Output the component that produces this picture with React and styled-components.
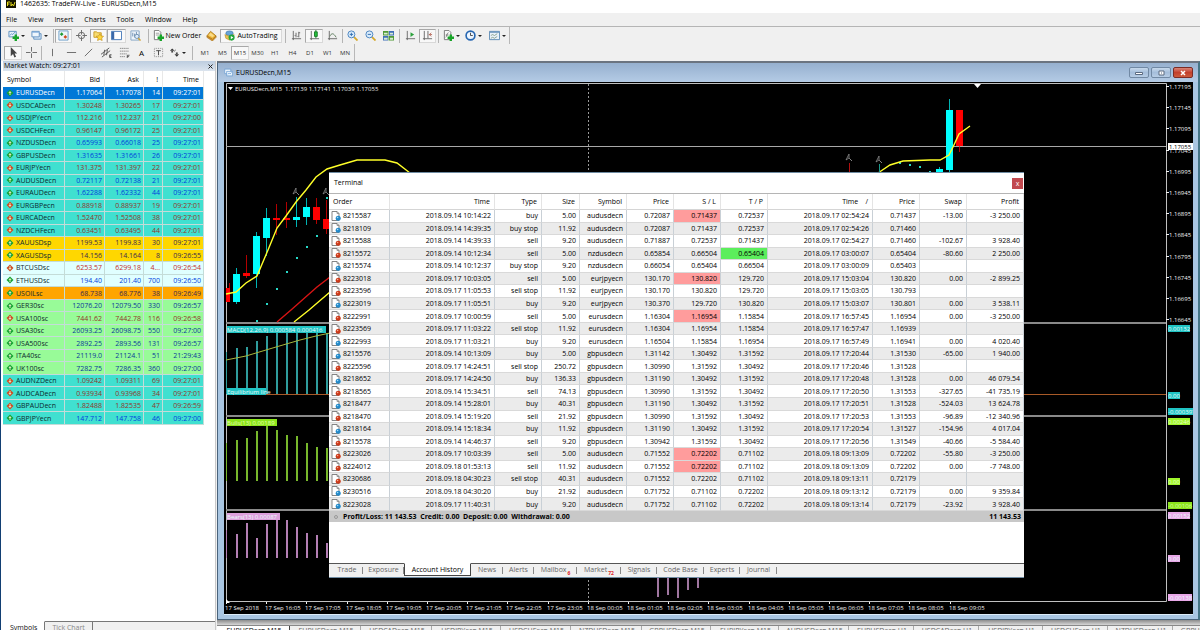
import React from "react";
import styled, { createGlobalStyle, css } from "styled-components";

const GlobalStyle = createGlobalStyle`
  * { box-sizing: border-box; }
  body {
    margin: 0;
    font-family: "Open Sans", "Noto Sans", sans-serif;
    font-size: 7px;
    line-height: 12px;
    color: #000;
    background: #f0f0f0;
  }
  button {
    margin: 0;
    padding: 0;
    border: 0;
    background: none;
    font: inherit;
    color: inherit;
    white-space: nowrap;
  }
  svg { display: block; }
`;

const Shell = styled.div`
  display: flex;
  flex-direction: column;
  height: 100vh;
  overflow: hidden;
  border-left: 1px solid #123f73;
  background: #f0f0f0;
`;

const TitleBar = styled.header`
  display: flex;
  gap: 4px;
  height: 13px;
  padding-left: 5px;
  background: #fff;
  line-height: 8px;
`;

const MenuBar = styled.nav`
  display: flex;
  align-items: center;
  gap: 11px;
  height: 13px;
  padding-left: 5px;
`;

const ToolRow = styled.div`
  display: flex;
  align-items: center;
  width: max-content;
  height: ${(p) => p.$h}px;
  padding-left: 3px;
  border-right: 1px solid #b8b8b8;
`;

const ToolArea = styled.div`
  border-top: 1px solid #b5b5b5;
`;

const Tool = styled.button`
  display: flex;
  align-items: center;
  justify-content: center;
  gap: 2px;
  width: ${(p) => p.$w}px;
  height: 14px;
  font-size: ${(p) => p.$size || 7}px;
  color: ${(p) => p.$color || "#000"};
  ${(p) =>
    p.$on &&
    css`
      background: #f8f8f8;
      border: 1px solid #d8d8d8;
      border-top-color: #a8a8a8;
      border-left-color: #a8a8a8;
    `}
`;

const Divider = styled.span`
  width: ${(p) => p.$w}px;
  height: 14px;
  background: linear-gradient(#b4b4b4, #b4b4b4) center / 1px 100% no-repeat;
`;

const Caret = styled.i`
  border: 2px solid transparent;
  border-top-color: #222;
  border-bottom: 0;
`;

const Main = styled.main`
  display: flex;
  flex: 1;
  min-height: 0;
`;

const Watch = styled.section`
  display: flex;
  flex-direction: column;
  width: 215px;
  padding-left: 2px;
  border-right: 1px solid #c9c9c9;
  background: #fff;
`;

const WatchTitle = styled.div`
  display: flex;
  align-items: center;
  justify-content: space-between;
  height: 10px;
  padding: 0 2px 0 1px;
  background: linear-gradient(#bdcddf, #dbe4ee);
`;

const WatchTable = styled.table`
  table-layout: fixed;
  width: 201px;
  height: 354px;
  border-collapse: separate;
  border-spacing: 0;
  line-height: 11px;
`;

const WatchHead = styled.th`
  height: 16px;
  padding: 0 4px;
  border-right: 1px solid #e8e8e8;
  font-weight: 400;
  text-align: ${(p) => (p.$left ? "left" : "right")};
`;

const WatchRow = styled.tr`
  background: ${(p) => p.$bg};
  color: ${(p) => p.$color};
`;

const WatchCell = styled.td`
  padding: 0 2px;
  border-right: 1px solid #c4dcd8;
  border-bottom: 1px solid #c4dcd8;
  text-align: right;
  white-space: nowrap;
`;

const SymbolCell = styled(WatchCell)`
  padding: 0;
  color: ${(p) => (p.$selected ? "#fff" : "#0c2a2e")};
  text-align: left;
`;

const SymbolLabel = styled.span`
  display: flex;
  align-items: center;
  gap: 2px;
  padding-left: 3px;
`;

const WatchTabs = styled.div`
  display: flex;
  height: 9px;
  margin-top: auto;
  overflow: hidden;
`;

const WatchTab = styled.button`
  height: 12px;
  padding: 0 7px;
  border-top: 1px solid ${(p) => (p.$on ? "#fff" : "#777")};
  border-right: 1px solid #777;
  background: ${(p) => (p.$on ? "#fff" : "#f0f0f0")};
  color: ${(p) => (p.$on ? "#111" : "#888")};
  line-height: 10px;
`;

const TabFiller = styled.div`
  flex: 1;
  border-top: 1px solid #777;
  background: #f0f0f0;
`;

const Desk = styled.section`
  position: relative;
  display: flex;
  flex: 1;
  flex-direction: column;
  min-width: 0;
  margin-left: 1px;
  background: #f0f0f0;
`;

const ChartWindow = styled.div`
  display: flex;
  flex: 1;
  flex-direction: column;
  min-height: 0;
  padding: 0 5px 4px 6px;
  border: 1px solid #49637b;
  border-top: 2px solid #6b7480;
  border-right: 2px solid #457586;
  background: #a9c6e2;
`;

const ChartTitle = styled.div`
  display: flex;
  align-items: center;
  gap: 3px;
  height: 19px;
  margin: 0 -5px 0 -6px;
  padding: 0 5px 0 6px;
  background: linear-gradient(#96b0cf, #b4cbe5);
`;

const WindowButtons = styled.div`
  display: flex;
  gap: 2px;
  margin-left: auto;
`;

const WindowButton = styled.button`
  display: flex;
  align-items: center;
  justify-content: center;
  width: 20px;
  height: 11px;
  border: 1px solid ${(p) => (p.$red ? "#7c2b25" : "#7189a4")};
  border-radius: 2px;
  background: ${(p) =>
    p.$red
      ? "linear-gradient(#d98478, #c33f2b 50%, #cc5a3c)"
      : "linear-gradient(#c6d8eb, #a5bedb 50%, #b7cde5)"};
`;

const ChartBody = styled.div`
  flex: 1;
  min-height: 0;
  background: #000;
  border-bottom: 1px solid #dcecf8;
`;

const ChartSvg = styled.svg`
  width: 100%;
  height: 100%;
  font-size: 6px;
  fill: #f2f2f2;
`;

const DeskGutter = styled.div`
  height: 5px;
  background: linear-gradient(#8c8c8c, #d6d6d6);
`;

const ChartTabs = styled.div`
  display: flex;
  height: 5px;
  overflow: hidden;
  border-top: 1px solid #888;
`;

const ChartTab = styled.button`
  flex: none;
  width: ${(p) => p.$w}px;
  height: 9px;
  padding-left: 2px;
  line-height: 9px;
  border-right: 1px solid ${(p) => (p.$on ? "#444" : "#aaa")};
  background: ${(p) => (p.$on ? "#fff" : "#f0f0f0")};
  color: ${(p) => (p.$on ? "#000" : "#666")};
`;

// floats above the chart window
const Terminal = styled.section`
  position: absolute;
  top: 111px;
  left: 112px;
  right: 176px;
  border: 1px solid #6f8ca3;
  border-width: 1px 0;
  background: #fff;
`;

const TerminalTitle = styled.div`
  display: flex;
  align-items: center;
  justify-content: space-between;
  height: 21px;
  padding: 0 1px 0 5px;
  border-bottom: 1px solid #b5b5b5;
`;

const CloseButton = styled.button`
  width: 11px;
  height: 11px;
  background: #c2494f;
  color: #fff;
  line-height: 9px;
`;

const History = styled.table`
  table-layout: fixed;
  width: 100%;
  height: 328px;
  border-collapse: separate;
  border-spacing: 0;
  line-height: 11px;
`;

const HistoryHead = styled.th`
  height: 16px;
  padding: 0 4px;
  border-right: 1px solid #e4e4e4;
  border-bottom: 1px solid #d5d5d5;
  font-weight: 400;
  text-align: ${(p) => (p.$left ? "left" : "right")};
  white-space: pre;
`;

const HistoryRow = styled.tr`
  &:nth-child(even) { background: #ebebeb; }
`;

const HistoryCell = styled.td`
  padding: 0 3px 0 2px;
  border-right: 1px solid #c9d0d6;
  border-bottom: 1px solid #d9d9d9;
  background: ${(p) => p.$mark || "transparent"};
  text-align: right;
  white-space: nowrap;
`;

const OrderLabel = styled.span`
  display: flex;
  align-items: center;
  gap: 2px;
`;

const TotalCell = styled.td`
  padding: 0 3px 0 5px;
  background: #c8c8c8;
  font-weight: 700;
  text-align: ${(p) => (p.$right ? "right" : "left")};
  white-space: pre;
`;

const TotalLabel = styled.span`
  display: flex;
  align-items: center;
  gap: 5px;
`;

const Bullet = styled.i`
  width: 4px;
  height: 4px;
  border: 1px solid #999;
  border-radius: 2px;
`;

const TerminalTabs = styled.div`
  display: flex;
  height: 14px;
  margin-top: 41px;
  padding-left: 2px;
  border-top: 1px solid #555;
  background: #f0f0f0;
`;

const TerminalTab = styled.button`
  display: flex;
  align-items: center;
  justify-content: center;
  width: ${(p) => p.$w}px;
  height: 12px;
  color: #666;
  background: linear-gradient(#888, #888) right center / 1px 7px no-repeat;
  ${(p) =>
    p.$on &&
    css`
      margin-top: -1px;
      height: 13px;
      color: #000;
      background: #fff;
      border: 1px solid #444;
      border-top-color: #fff;
    `}
`;

const Badge = styled.sub`
  align-self: flex-end;
  margin-left: 1px;
  color: #d22;
  font-size: 5px;
  font-weight: 700;
  line-height: 6px;
`;

/* ---------- icons ---------- */

const Icon = ({ children, s = 11 }) => (
  <svg width={s} height={s} viewBox="0 0 12 12" fill="none" stroke="#555" aria-hidden="true">
    {children}
  </svg>
);

const plus = <path d="M8.5 5v7M5 8.5h7" stroke="#18a428" strokeWidth="2.6" />;
const axes = <path d="M2.5 1v10M1 9.5h10" stroke="#666" />;

const icons = {
  newChart: <><path d="M1 1.5h8v6H1z" fill="#e6f1fb" stroke="#5b8fc0" /><path d="M2 6l2-2 1 1 3-3" stroke="#5b8fc0" />{plus}</>,
  profiles: <><path d="M3 4h8v6H3z" fill="#d6e6f6" stroke="#5f8fc0" /><path d="M1 1.5h8v6H1z" fill="#eef6fd" stroke="#5f8fc0" /><path d="M1 2.5h8" stroke="#84afe0" /></>,
  watch: <><path d="M1 1h10v10H1z" fill="#eef5fb" stroke="#6c9ec8" /><path d="M2 4.500l2-2 2 2-2 2z" fill="#1e9b35" stroke="none" /><path d="M6 7.500l2-2 2 2-2 2z" fill="#d04a1c" stroke="none" /></>,
  target: <><circle cx="6" cy="6" r="3.500" stroke="#666" /><path d="M6 0v5M6 7v5M0 6h5M7 6h5" stroke="#666" /></>,
  folder: <><path d="M1 2h3l1 1h4v5H1z" fill="#f7dc72" stroke="#c99b29" /><path d="M7.500 4l1.300 2.500 2.700.3-2 2 .5 2.700-2.500-1.300L5 11.500l.5-2.700-2-2 2.700-.3z" fill="#ffd83d" stroke="#c18d1a" strokeWidth=".7" /></>,
  panel: <><path d="M.5 1.500h11v9H.5z" fill="#fff" stroke="#3f74b6" /><path d="M1 2h2.500v8H1z" fill="#3b68a8" stroke="none" /></>,
  tester: <><path d="M1 1h9v10H1z" fill="#eef4fa" stroke="#83a5c5" /><path d="M3 7V3m2 5V4m2 3V2" stroke="#6b8cb0" /><circle cx="7.500" cy="7" r="2.300" fill="#dceafa" stroke="#6c8eae" /><path d="M9 9l2.500 2.500" stroke="#d0a030" strokeWidth="1.500" /></>,
  order: <><path d="M1.500.5h5l2 2v8h-7z" fill="#fff" stroke="#777" /><path d="M3 3.500h4M3 5.500h4" stroke="#999" />{plus}</>,
  book: <><path d="M1 6.500l4-5 6 5-4 4z" fill="#efb93a" stroke="#b07d20" /><path d="M1 6.500v1.500l6 4 4-4V6.500l-4 3.500z" stroke="#a8741c" strokeWidth=".7" fill="#d8932c" /><path d="M3 5.500l2-2.500 4 3.200-2 1.800z" fill="#f9dc8a" stroke="none" /></>,
  auto: <><ellipse cx="6" cy="3.500" rx="4" ry="2.500" fill="#68a5d8" stroke="#3e77a8" strokeWidth=".7" /><path d="M1 5l5 2 5-2-1 4-4 2-4-2z" fill="#e9c352" stroke="#b98b22" strokeWidth=".7" /><circle cx="8.300" cy="8.300" r="3.300" fill="#21a53b" stroke="none" /><path d="M7.400 6.600l2.800 1.700-2.800 1.700z" fill="#fff" stroke="none" /></>,
  bars: <>{axes}<path d="M5.500 8V3M8.500 8V2M8.500 3H10M4 6h1M7 7h1" stroke="#666" /></>,
  candle: <>{axes}<path d="M7.500 0v9" stroke="#187a25" /><path d="M6 2h3v5H6z" fill="#24c13c" stroke="#187a25" /></>,
  line: <>{axes}<path d="M3 7c2-4 4-4 7 1" stroke="#5a7a5a" /></>,
  zoomIn: <><path d="M7.500 7.500l4 4" stroke="#d5a92d" strokeWidth="2" /><circle cx="4.800" cy="4.800" r="3.800" fill="#d9ebfb" stroke="#4580bd" /><path d="M3 4.800h3.600M4.800 3v3.600" stroke="#2f6cae" /></>,
  zoomOut: <><path d="M7.500 7.500l4 4" stroke="#d5a92d" strokeWidth="2" /><circle cx="4.800" cy="4.800" r="3.800" fill="#d9ebfb" stroke="#4580bd" /><path d="M3 4.800h3.600" stroke="#2f6cae" /></>,
  tile: <><path d="M0 1h6v5H0zM6 6.500h6v5H6z" fill="#4f9a35" stroke="none" /><path d="M6.500 1H12v5H6.500zM0 6.500h5.500v5H0z" fill="#3f6fb8" stroke="none" /><path d="M1 3h4v2H1zM7.500 3H11v2H7.500zM1 8.500h4v2H1zM7.500 8.500H11v2H7.500z" fill="#d8ecd4" stroke="none" /></>,
  scroll: <>{axes}<path d="M6 2.500l4 2.500-4 2.500z" fill="#2ca13c" stroke="none" /></>,
  shift: <>{axes}<path d="M6.500 1v8" stroke="#666" /><path d="M11 5H8M10 3L8 5l2 2" stroke="#a5402e" strokeWidth=".8" /></>,
  indicator: <><path d="M1.500.5h5l2 2v8h-7z" fill="#f8f8f8" stroke="#777" /><path d="M3 8c1 0 1-5 3-5M3 5.500h3" stroke="#777" />{plus}</>,
  clock: <><circle cx="6" cy="6" r="4.800" fill="#eef6ff" stroke="#2767b2" strokeWidth="1.800" /><path d="M6 3v3h2.500" stroke="#333" strokeWidth=".9" /></>,
  template: <><path d="M.5 1.500h11v9H.5z" fill="#e9f2fa" stroke="#5b89b4" /><path d="M1 2.500h10" stroke="#5b89b4" /><path d="M2 6l2-1 2 1 3-2M2 9l2-1 2 1 3-2" stroke="#708c70" strokeWidth=".8" /></>,
  cursor: <path d="M3 0v10l2.500-2.300L7 11.500l1.800-.8-1.600-3.500H10z" fill="#444" stroke="none" />,
  cross: <path d="M6 0v5M6 7v5M0 6h5M7 6h5" stroke="#666" />,
  vline: <path d="M6 2v8" stroke="#666" />,
  hline: <path d="M1 6h10" stroke="#666" />,
  trend: <path d="M2 10l8-8" stroke="#666" />,
  channel: <><path d="M0 8l9-7M1 11l9-7M3 9l1-6M6 9l1-6" stroke="#555" /><path d="M11.500 8.500h-2v3h2M9.500 10h1.500" stroke="#222" strokeWidth=".8" /></>,
  fibo: <><path d="M1 1.500h10M1 4.500h10M1 7.500h8M1 10.500h6" stroke="#888" strokeDasharray="1.500 .5" /><path d="M9 12V9h2.500M9 10.500h2" stroke="#333" strokeWidth=".8" /></>,
  label: <><path d="M1.500 1.500h9v9h-9z" stroke="#888" strokeDasharray="1 1" /><path d="M3.500 4h5M6 4v5" stroke="#444" /></>,
  arrows: <><path d="M1 4l2.500-2.500L6 4z" fill="#333" stroke="none" /><path d="M2.500 4.500h2v1.500h-2z" fill="#333" stroke="none" /><path d="M6 8h5L8.500 10.500z" fill="#333" stroke="none" /><path d="M7.500 6h2v1.500h-2z" fill="#333" stroke="none" /><path d="M5.500 5l2-2" stroke="#555" strokeWidth=".8" /></>,
  windows: <><path d="M1 1.500h8v6H1z" fill="#f4faff" stroke="#6a9cd0" /><path d="M3.500 4.500h8v6h-8z" fill="#e8f3fd" stroke="#6a9cd0" /><path d="M5 8l2-1 1 1 2-2" stroke="#6a9cd0" /></>,
};

const Direction = ({ up }) => (
  <svg width="8" height="8" viewBox="0 0 8 8" aria-hidden="true">
    <path d="M4 .5L7.500 4 4 7.500.5 4z" fill={up ? "#15a032" : "#cf4a20"} />
    <path d={up ? "M4 2l1.600 2H4.500v2h-1V4H2.400z" : "M4 6l1.600-2H4.500V2h-1v2H2.400z"} fill="#dfe8c0" />
  </svg>
);

const OrderIcon = ({ buy }) => (
  <svg width="10" height="10" viewBox="0 0 10 10" aria-hidden="true">
    <path d="M1 .5h5l2 2v7H1z" fill="#fff" stroke="#777" strokeWidth=".9" />
    <path d="M6 .5v2h2" fill="none" stroke="#777" strokeWidth=".7" />
    <circle cx="7.200" cy="7.200" r="2.500" fill={buy ? "#2389c9" : "#cc3a1a"} />
    <circle cx="6.600" cy="6.500" r=".8" fill={buy ? "#a8dcf8" : "#f6ad94"} />
  </svg>
);

/* ---------- data ---------- */

const topTools = [
  { icon: "newChart", w: 24, menu: true, label: "New chart" },
  { icon: "profiles", w: 23, menu: true, label: "Profiles" },
  { sep: 4 },
  { icon: "watch", w: 17, on: true, label: "Market watch" },
  { icon: "target", w: 18, label: "Data window" },
  { icon: "folder", w: 17, on: true, label: "Navigator" },
  { icon: "panel", w: 19, on: true, label: "Terminal" },
  { icon: "tester", w: 19, label: "Strategy tester" },
  { sep: 6 },
  { icon: "order", w: 52, text: "New Order" },
  { icon: "book", w: 17, label: "MetaEditor" },
  { icon: "auto", w: 62, on: true, text: "AutoTrading" },
  { sep: 6 },
  { icon: "bars", w: 17, label: "Bar chart" },
  { icon: "candle", w: 18, on: true, label: "Candlesticks" },
  { icon: "line", w: 18, label: "Line chart" },
  { sep: 3 },
  { icon: "zoomIn", w: 17, label: "Zoom in" },
  { icon: "zoomOut", w: 18, label: "Zoom out" },
  { icon: "tile", w: 18, label: "Tile windows" },
  { sep: 5 },
  { icon: "scroll", w: 17, label: "Auto scroll" },
  { icon: "shift", w: 17, on: true, label: "Chart shift" },
  { sep: 5 },
  { icon: "indicator", w: 21, menu: true, label: "Indicators" },
  { icon: "clock", w: 23, menu: true, label: "Periods" },
  { icon: "template", w: 24, menu: true, label: "Templates" },
];

const drawTools = [
  { icon: "cursor", w: 18, on: true, label: "Cursor" },
  { icon: "cross", w: 18, label: "Crosshair" },
  { sep: 3 },
  { icon: "vline", w: 19, label: "Vertical line" },
  { icon: "hline", w: 18, label: "Horizontal line" },
  { icon: "trend", w: 17, label: "Trendline" },
  { icon: "channel", w: 18, label: "Channel" },
  { icon: "fibo", w: 18, label: "Fibonacci" },
  { text: "A", w: 17, size: 8 },
  { icon: "label", w: 16, label: "Text label" },
  { icon: "arrows", w: 22, menu: true, label: "Arrows" },
  { sep: 8 },
  ...["M1", "M5", "M15", "M30", "H1", "H4", "D1", "W1", "MN"].map((t, i) => ({
    text: t,
    w: i % 2 ? 17 : 18,
    size: 6,
    on: t === "M15",
    color: "#333",
  })),
];

const TURQ = "#40e0d0";
const GOLD = "#ffd700";
const ICE = "#e0ffff";
const GREEN = "#98fb98";

// symbol, bid, ask, spread, time, up, background
const quotes = [
  ["EURUSDecn", "1.17064", "1.17078", "14", "09:27:01", 1, "#0078d7"],
  ["USDCADecn", "1.30248", "1.30265", "17", "09:27:01", 0, TURQ],
  ["USDJPYecn", "112.216", "112.237", "21", "09:27:00", 0, TURQ],
  ["USDCHFecn", "0.96147", "0.96172", "25", "09:27:01", 0, TURQ],
  ["NZDUSDecn", "0.65993", "0.66018", "25", "09:27:01", 1, TURQ],
  ["GBPUSDecn", "1.31635", "1.31661", "26", "09:27:01", 1, TURQ],
  ["EURJPYecn", "131.375", "131.397", "22", "09:27:01", 0, TURQ],
  ["AUDUSDecn", "0.72117", "0.72138", "21", "09:27:01", 1, TURQ],
  ["EURAUDecn", "1.62288", "1.62332", "44", "09:27:01", 1, TURQ],
  ["EURGBPecn", "0.88918", "0.88937", "19", "09:27:01", 0, TURQ],
  ["EURCADecn", "1.52470", "1.52508", "38", "09:27:01", 0, TURQ],
  ["NZDCHFecn", "0.63451", "0.63495", "44", "09:27:01", 0, TURQ],
  ["XAUUSDsp", "1199.53", "1199.83", "30", "09:27:01", 1, GOLD],
  ["XAGUSDsp", "14.156", "14.164", "8", "09:26:55", 1, GOLD],
  ["BTCUSDsc", "6253.57", "6299.18", "4...", "09:26:54", 0, ICE],
  ["ETHUSDsc", "194.40", "201.40", "700", "09:26:50", 1, ICE],
  ["USOILsc", "68.738", "68.776", "38", "09:26:49", 1, "#ffa500"],
  ["GER30sc", "12076.20", "12079.50", "330", "09:26:57", 1, GREEN],
  ["USA100sc", "7441.62", "7442.78", "116", "09:26:58", 0, GREEN],
  ["USA30sc", "26093.25", "26098.75", "550", "09:27:00", 1, GREEN],
  ["USA500sc", "2892.25", "2893.56", "131", "09:26:57", 1, GREEN],
  ["ITA40sc", "21119.0", "21124.1", "51", "21:29:43", 1, GREEN],
  ["UK100sc", "7282.75", "7286.35", "360", "09:27:00", 1, GREEN],
  ["AUDNZDecn", "1.09242", "1.09311", "69", "09:27:01", 0, TURQ],
  ["AUDCADecn", "0.93934", "0.93968", "34", "09:27:01", 0, TURQ],
  ["GBPAUDecn", "1.82488", "1.82535", "47", "09:26:59", 0, TURQ],
  ["GBPJPYecn", "147.712", "147.758", "46", "09:27:00", 1, TURQ],
];

const quoteColor = (up, bg, first) => {
  if (first) return "#fff";
  if (!up) return bg === ICE ? "#c42e2e" : "#92352a";
  if (bg === GOLD || bg === "#ffa500") return "#3a2a50";
  return bg === GREEN ? "#0a389c" : "#0040dc";
};

const historyWidths = [61, 105, 47, 38, 47, 47, 47, 47, 105, 47, 47, 57];
const historyHeads = ["Order", "Time", "Type", "Size", "Symbol", "Price", "S / L", "T / P", "Time    /", "Price", "Swap", "Profit"];

const orders = `8215587|2018.09.14 10:14:22|buy|5.00|audusdecn|0.72087|0.71437|0.72537|2018.09.17 02:54:24|0.71437|-13.00|-3 250.00|s
8218109|2018.09.14 14:39:35|buy stop|11.92|audusdecn|0.72087|0.71437|0.72537|2018.09.17 02:54:26|0.71460|||
8215588|2018.09.14 14:39:33|sell|9.20|audusdecn|0.71887|0.72537|0.71437|2018.09.17 02:54:27|0.71460|-102.67|3 928.40|
8215572|2018.09.14 10:12:34|sell|5.00|nzdusdecn|0.65854|0.66504|0.65404|2018.09.17 03:00:07|0.65404|-80.60|2 250.00|t
8215574|2018.09.14 10:12:37|buy stop|9.20|nzdusdecn|0.66054|0.65404|0.66504|2018.09.17 03:00:09|0.65403|||
8223018|2018.09.17 10:03:05|sell|5.00|eurjpyecn|130.170|130.820|129.720|2018.09.17 15:03:04|130.820|0.00|-2 899.25|s
8223596|2018.09.17 11:05:53|sell stop|11.92|eurjpyecn|130.170|130.820|129.720|2018.09.17 15:03:05|130.793|||
8223019|2018.09.17 11:05:51|buy|9.20|eurjpyecn|130.370|129.720|130.820|2018.09.17 15:03:07|130.801|0.00|3 538.11|
8222991|2018.09.17 10:00:59|sell|5.00|eurusdecn|1.16304|1.16954|1.15854|2018.09.17 16:57:45|1.16954|0.00|-3 250.00|s
8223569|2018.09.17 11:03:22|sell stop|11.92|eurusdecn|1.16304|1.16954|1.15854|2018.09.17 16:57:47|1.16939|||
8222993|2018.09.17 11:03:21|buy|9.20|eurusdecn|1.16504|1.15854|1.16954|2018.09.17 16:57:49|1.16941|0.00|4 020.40|
8215576|2018.09.14 10:13:09|buy|5.00|gbpusdecn|1.31142|1.30492|1.31592|2018.09.17 17:20:44|1.31530|-65.00|1 940.00|
8225596|2018.09.17 14:24:51|sell stop|250.72|gbpusdecn|1.30990|1.31592|1.30492|2018.09.17 17:20:46|1.31528|||
8218652|2018.09.17 14:24:50|buy|136.33|gbpusdecn|1.31190|1.30492|1.31592|2018.09.17 17:20:48|1.31528|0.00|46 079.54|
8218565|2018.09.14 15:34:51|sell|74.13|gbpusdecn|1.30990|1.31592|1.30492|2018.09.17 17:20:50|1.31553|-327.65|-41 735.19|
8218477|2018.09.14 15:28:01|buy|40.31|gbpusdecn|1.31190|1.30492|1.31592|2018.09.17 17:20:51|1.31528|-524.03|13 624.78|
8218470|2018.09.14 15:19:20|sell|21.92|gbpusdecn|1.30990|1.31592|1.30492|2018.09.17 17:20:53|1.31553|-96.89|-12 340.96|
8218164|2018.09.14 15:18:34|buy|11.92|gbpusdecn|1.31190|1.30492|1.31592|2018.09.17 17:20:54|1.31527|-154.96|4 017.04|
8215578|2018.09.14 14:46:37|sell|9.20|gbpusdecn|1.30942|1.31592|1.30492|2018.09.17 17:20:56|1.31549|-40.66|-5 584.40|
8223026|2018.09.17 10:03:39|sell|5.00|audusdecn|0.71552|0.72202|0.71102|2018.09.18 09:13:09|0.72202|-55.80|-3 250.00|s
8224012|2018.09.18 01:53:13|sell|11.92|audusdecn|0.71552|0.72202|0.71102|2018.09.18 09:13:09|0.72202|0.00|-7 748.00|s
8230686|2018.09.18 04:30:23|sell stop|40.31|audusdecn|0.71552|0.72202|0.71102|2018.09.18 09:13:11|0.72179|||
8230516|2018.09.18 04:30:20|buy|21.92|audusdecn|0.71752|0.71102|0.72202|2018.09.18 09:13:12|0.72179|0.00|9 359.84|
8223028|2018.09.17 11:40:31|buy|9.20|audusdecn|0.71752|0.71102|0.72202|2018.09.18 09:13:14|0.72179|-23.92|3 928.40|`
  .split("\n")
  .map((line) => line.split("|"));

const terminalTabs = [
  ["Trade", 32], ["Exposure", 41], ["Account History", 67], ["News", 32], ["Alerts", 31],
  ["Mailbox", 43, "6"], ["Market", 44, "72"], ["Signals", 36], ["Code Base", 47],
  ["Experts", 36], ["Journal", 37],
];

const chartTabs = [
  ["EURUSDecn,M15", 73], ["EURUSDecn,M15", 71], ["USDCADecn,M15", 71], ["USDJPYecn,M15", 69],
  ["USDCHFecn,M15", 70], ["NZDUSDecn,M15", 71], ["GBPUSDecn,M15", 69], ["EURJPYecn,M15", 68],
  ["AUDUSDecn,M15", 70], ["EURUSDecn,H1", 65], ["USDCADecn,H1", 65], ["USDJPYecn,H1", 64],
  ["USDCHFecn,H1", 65], ["NZDUSDecn,H1", 65], ["GBPUSDecn,H1", 65],
];

/* ---------- chart ---------- */

const CYAN = "#00ffff";
const RED = "#ff0000";

// left, width, open/close, wick top/bottom, colour
const candles = [
  [226, 4, 288, 302, 283, 302, RED],
  [233, 7, 274, 302, 268, 304, CYAN],
  [243, 7, 273, 276, 255, 278, RED],
  [253, 7, 236, 274, 232, 288, CYAN],
  [263, 7, 218, 238, 208, 256, CYAN],
  [273, 7, 218, 220, 204, 235, RED],
  [283, 7, 218, 220, 202, 228, RED],
  [293, 7, 217, 220, 197, 227, CYAN],
  [303, 7, 207, 217, 198, 225, CYAN],
  [313, 7, 207, 220, 198, 224, RED],
  [323, 7, 219, 229, 200, 234, RED],
  [936, 7, 169, 174, 167, 176, CYAN],
  [946, 7, 110, 170, 99, 172, CYAN],
  [956, 7, 110, 146, 110, 152, RED],
];

const dots = [[256, 320], [266, 303], [276, 288], [286, 271], [296, 257], [306, 246], [316, 235], [326, 197], [899, 162], [909, 164], [919, 166], [929, 171]];

const histograms = [
  { color: "#2f9c9c", base: 394, tops: [352, 348, 347, 341, 336, 333, 333, 333, 333, 333, 333] },
  { color: "#78b82c", base: 481, tops: [443, 440, 438, 431, 426, 430, 435, 436, 443, 447, 448] },
  { color: "#b47fb4", base: 558, tops: [530, 534, 523, 538, 524, 519, 520, 527, 533, 535, 543] },
];

const tags = [
  [227, 326, 99, "MACD(12,26,9) 0.000584 0.000416", "#20c4c4"],
  [227, 388, 39, "Equilibrium line", "#20c4c4"],
  [227, 419, 50, "Bulls(13) 0.00189", "#8be41c", "#e4ffb0"],
  [227, 513, 53, "Bears(13) 0.00087", "#dda0dd"],
  [1168, 325, 22, "0.00132", "#20c4c4"],
  [1168, 392, 12, "0.00", "#20c4c4"],
  [1168, 408, 25, "-0.000397", "#20c4c4"],
  [1168, 418, 22, "0.00246", "#a0f62c", "#e8ffc8"],
  [1168, 478, 12, "0.00", "#a0f62c", "#e8ffc8"],
  [1168, 502, 24, "-0.00106", "#8be41c", "#d8ffa0"],
  [1168, 512, 22, "0.00152", "#e8a8e8"],
  [1168, 555, 12, "0.00", "#e8a8e8"],
  [1168, 594, 24, "-0.00138", "#e8a8e8"],
];

const prices = ["1.17195", "1.17145", "1.17095", "1.17045", "1.16995", "1.16945", "1.16895", "1.16845", "1.16795", "1.16745", "1.16695", "1.16645"];
const times = ["17 Sep 2018", "17 Sep 16:05", "17 Sep 17:05", "17 Sep 18:05", "17 Sep 19:05", "17 Sep 20:05", "17 Sep 21:05", "17 Sep 22:05", "17 Sep 23:05",
  ...[0, 1, 2, 3, 4, 5, 6, 7, 8, 9].map((h) => `18 Sep 0${h}:05`)];

const priceY = (i) => Math.round(87 + i * 21.2);
const timeX = (i) => Math.round(226 + i * 40.2);

function Chart() {
  return (
    <ChartSvg viewBox="224 82 969 532" preserveAspectRatio="none">
      <g fill="none" stroke="#c0c0c0">
        <path d="M226.500 601.500V83.500H1166.500V601.500z" />
        <path d="M226 146.500H1166" stroke="#a8a8a8" />
        <path d="M226 323H1166M226 416H1166M226 510H1166" stroke="#8a8a8a" strokeWidth="2" />
        <path d="M588.500 84V601" stroke="#999" strokeDasharray="2 2" />
        <path d="M266 394.500H1166" stroke="#a85a28" />
      </g>
      {candles.map(([x, w, top, bottom, high, low, color]) => (
        <g key={x} fill={color}>
          <rect x={x} y={top} width={w} height={bottom - top} />
          <rect x={x + 3} y={high} width="1" height={low - high} opacity=".7" />
        </g>
      ))}
      {dots.map(([x, y]) => (
        <rect key={x} x={x} y={y} width="2" height="2" fill="#28d8c8" />
      ))}
      {histograms.map((h) =>
        h.tops.map((top, i) => (
          <rect key={h.color + i} x={226 + i * 10} y={top} width={i ? 2 : 1} height={h.base - top} fill={h.color} />
        ))
      )}
      {[597, 595, 598, 590, 588].map((bottom, i) => (
        <rect key={i} x={657 + i * 10} y="560" width="2" height={bottom - 560} fill="#a076a0" />
      ))}
      <g fill="none" stroke="#ffff28" strokeWidth="1.400">
        <path d="M226 294L236 292 246 283 257 276 268 250 277 228 286 216 296 202 306 190 316 177 327 169 340 165 357 160 385 160 397 163 410 173" />
        <path d="M294 322L309 310 330 292" />
        <path d="M878 173L890 165 903 161 930 160 940 160 949 155 953 147 959 134 970 126" />
        <path d="M277 322L291 310 317 287 330 277" stroke="#d81414" />
        <path d="M226 360L246 356 276 347 300 340 316 336 330 333" stroke="#a8b83c" strokeWidth="1" />
        <path d="M849.500 163v10" stroke="#b01010" strokeWidth="1" />
        <path d="M879.500 164v10" stroke="#1b9a8a" strokeWidth="1" />
      </g>
      {[[296, 188], [326, 188], [849, 154], [879, 156]].map(([x, y]) => (
        <path key={x} d={`M${x} ${y}l-3 6 3-2 3 3-2-2M${x} ${y}v4`} fill="none" stroke="#8c8c8c" strokeWidth=".8" />
      ))}
      {prices.map((p, i) => (
        <g key={p}>
          <rect x="1166" y={priceY(i) - 1} width="3" height="1" />
          <text x="1169" y={priceY(i) + 2}>{p}</text>
        </g>
      ))}
      <rect x="1168" y="143" width="25" height="7" fill="#fff" />
      <text x="1169" y="149" fill="#000">1.17055</text>
      {tags.map(([x, y, w, text, bg, color]) => (
        <g key={x + text + y}>
          <rect x={x} y={y} width={w} height="7" fill={bg} />
          <text x={x} y={y + 6} fill={color || "#eafcfc"}>{text}</text>
        </g>
      ))}
      {times.map((t, i) => (
        <g key={t}>
          <rect x={timeX(i)} y="602" width="1" height="2" />
          <text x={timeX(i) - 1} y="610">{t}</text>
        </g>
      ))}
      <path d="M228 87h5l-2.500 3zM974 84h7l-3.500 4zM226 599l4 4h-4z" fill="#fff" />
      <text x="235" y="91">EURUSDecn,M15</text>
      <text x="285" y="91">1.17139 1.17141 1.17039 1.17055</text>
    </ChartSvg>
  );
}

function Toolbar({ items, height }) {
  return (
    <ToolRow $h={height}>
      {items.map((t, i) =>
        t.sep ? (
          <Divider key={i} $w={t.sep} />
        ) : (
          <Tool key={i} $w={t.w} $on={t.on} $size={t.size} $color={t.color} aria-label={t.label}>
            {t.icon && <Icon>{icons[t.icon]}</Icon>}
            {t.text}
            {t.menu && <Caret />}
          </Tool>
        )
      )}
    </ToolRow>
  );
}

function MarketWatch() {
  return (
    <Watch>
      <WatchTitle>
        <span>Market Watch: 09:27:01</span>
        <button aria-label="Close market watch">
          <svg width="5" height="5" viewBox="0 0 5 5"><path d="M.5.5l4 4M4.500.5l-4 4" stroke="#222" /></svg>
        </button>
      </WatchTitle>
      <WatchTable>
        <colgroup>
          {[62, 40, 39, 19, 41].map((w, i) => <col key={i} width={w} />)}
        </colgroup>
        <thead>
          <tr>
            {["Symbol", "Bid", "Ask", "!", "Time"].map((h, i) => (
              <WatchHead key={h} $left={!i}>{h}</WatchHead>
            ))}
          </tr>
        </thead>
        <tbody>
          {quotes.map(([symbol, bid, ask, spread, time, up, bg], i) => (
            <WatchRow key={symbol} $bg={bg} $color={quoteColor(up, bg, i === 0)}>
              <SymbolCell $selected={i === 0}>
                <SymbolLabel><Direction up={up} />{symbol}</SymbolLabel>
              </SymbolCell>
              <WatchCell>{bid}</WatchCell>
              <WatchCell>{ask}</WatchCell>
              <WatchCell>{spread}</WatchCell>
              <WatchCell>{time}</WatchCell>
            </WatchRow>
          ))}
        </tbody>
      </WatchTable>
      <WatchTabs>
        <WatchTab $on>Symbols</WatchTab>
        <WatchTab>Tick Chart</WatchTab>
        <TabFiller />
      </WatchTabs>
    </Watch>
  );
}

function TerminalPanel() {
  const mark = (flag, col) => {
    if (flag === "s" && col === 6) return "#ff9c9c";
    if (flag === "t" && col === 7) return "#5cee5c";
    return null;
  };
  return (
    <Terminal>
      <TerminalTitle>
        <span>Terminal</span>
        <CloseButton aria-label="Close terminal">x</CloseButton>
      </TerminalTitle>
      <History>
        <colgroup>
          {historyWidths.map((w, i) => <col key={i} width={w} />)}
        </colgroup>
        <thead>
          <tr>
            {historyHeads.map((h, i) => <HistoryHead key={i} $left={!i}>{h}</HistoryHead>)}
          </tr>
        </thead>
        <tbody>
          {orders.map((row) => (
            <HistoryRow key={row[0]}>
              {row.slice(0, 12).map((v, col) => (
                <HistoryCell key={col} $mark={mark(row[12], col)}>
                  {col === 0 ? <OrderLabel><OrderIcon buy={row[2].startsWith("buy")} />{v}</OrderLabel> : v}
                </HistoryCell>
              ))}
            </HistoryRow>
          ))}
        </tbody>
        <tfoot>
          <tr>
            <TotalCell colSpan={10}>
              <TotalLabel>
                <Bullet />
                {"Profit/Loss: 11 143.53  Credit: 0.00  Deposit: 0.00  Withdrawal: 0.00"}
              </TotalLabel>
            </TotalCell>
            <TotalCell colSpan={2} $right>11 143.53</TotalCell>
          </tr>
        </tfoot>
      </History>
      <TerminalTabs>
        {terminalTabs.map(([name, w, count]) => (
          <TerminalTab key={name} $w={w} $on={name === "Account History"}>
            {name}
            {count && <Badge>{count}</Badge>}
          </TerminalTab>
        ))}
      </TerminalTabs>
    </Terminal>
  );
}

function App() {
  return (
    <Shell>
      <GlobalStyle />
      <TitleBar>
        <svg width="10" height="8" viewBox="0 0 10 8" aria-hidden="true">
          <path d="M0 0h10v8H0z" fill="#151500" />
          <path d="M1.500 6V2H4M1.500 4H3.500M5 2v4l1.300-2L7.500 6 9 2" fill="none" stroke="#e6dc1e" />
        </svg>
        <span>1462635: TradeFW-Live - EURUSDecn,M15</span>
      </TitleBar>
      <MenuBar>
        {["File", "View", "Insert", "Charts", "Tools", "Window", "Help"].map((m) => (
          <button key={m}>{m}</button>
        ))}
      </MenuBar>
      <ToolArea>
        <Toolbar items={topTools} height={17} />
        <Toolbar items={drawTools} height={17} />
      </ToolArea>
      <Main>
        <MarketWatch />
        <Desk>
          <ChartWindow>
            <ChartTitle>
              <Icon s={9}>{icons.windows}</Icon>
              <span>EURUSDecn,M15</span>
              <WindowButtons>
                <WindowButton aria-label="Minimize">
                  <svg width="8" height="6" viewBox="0 0 8 6"><path d="M.5 2.500h7v2h-7z" fill="#fff" stroke="#5a6a80" /></svg>
                </WindowButton>
                <WindowButton aria-label="Restore">
                  <svg width="7" height="6" viewBox="0 0 7 6"><path d="M1 1h5v4H1z" fill="#fff" stroke="#5a6a80" /><path d="M3 3h1" stroke="#5a6a80" /></svg>
                </WindowButton>
                <WindowButton $red aria-label="Close">
                  <svg width="6" height="6" viewBox="0 0 6 6"><path d="M1 1l4 4M5 1L1 5" stroke="#fff" strokeWidth="1.500" /></svg>
                </WindowButton>
              </WindowButtons>
            </ChartTitle>
            <ChartBody>
              <Chart />
            </ChartBody>
          </ChartWindow>
          <DeskGutter />
          <ChartTabs>
            {chartTabs.map(([name, w], i) => (
              <ChartTab key={i} $w={w} $on={i === 0}>{name}</ChartTab>
            ))}
          </ChartTabs>
          <TerminalPanel />
        </Desk>
      </Main>
    </Shell>
  );
}

export default App;
